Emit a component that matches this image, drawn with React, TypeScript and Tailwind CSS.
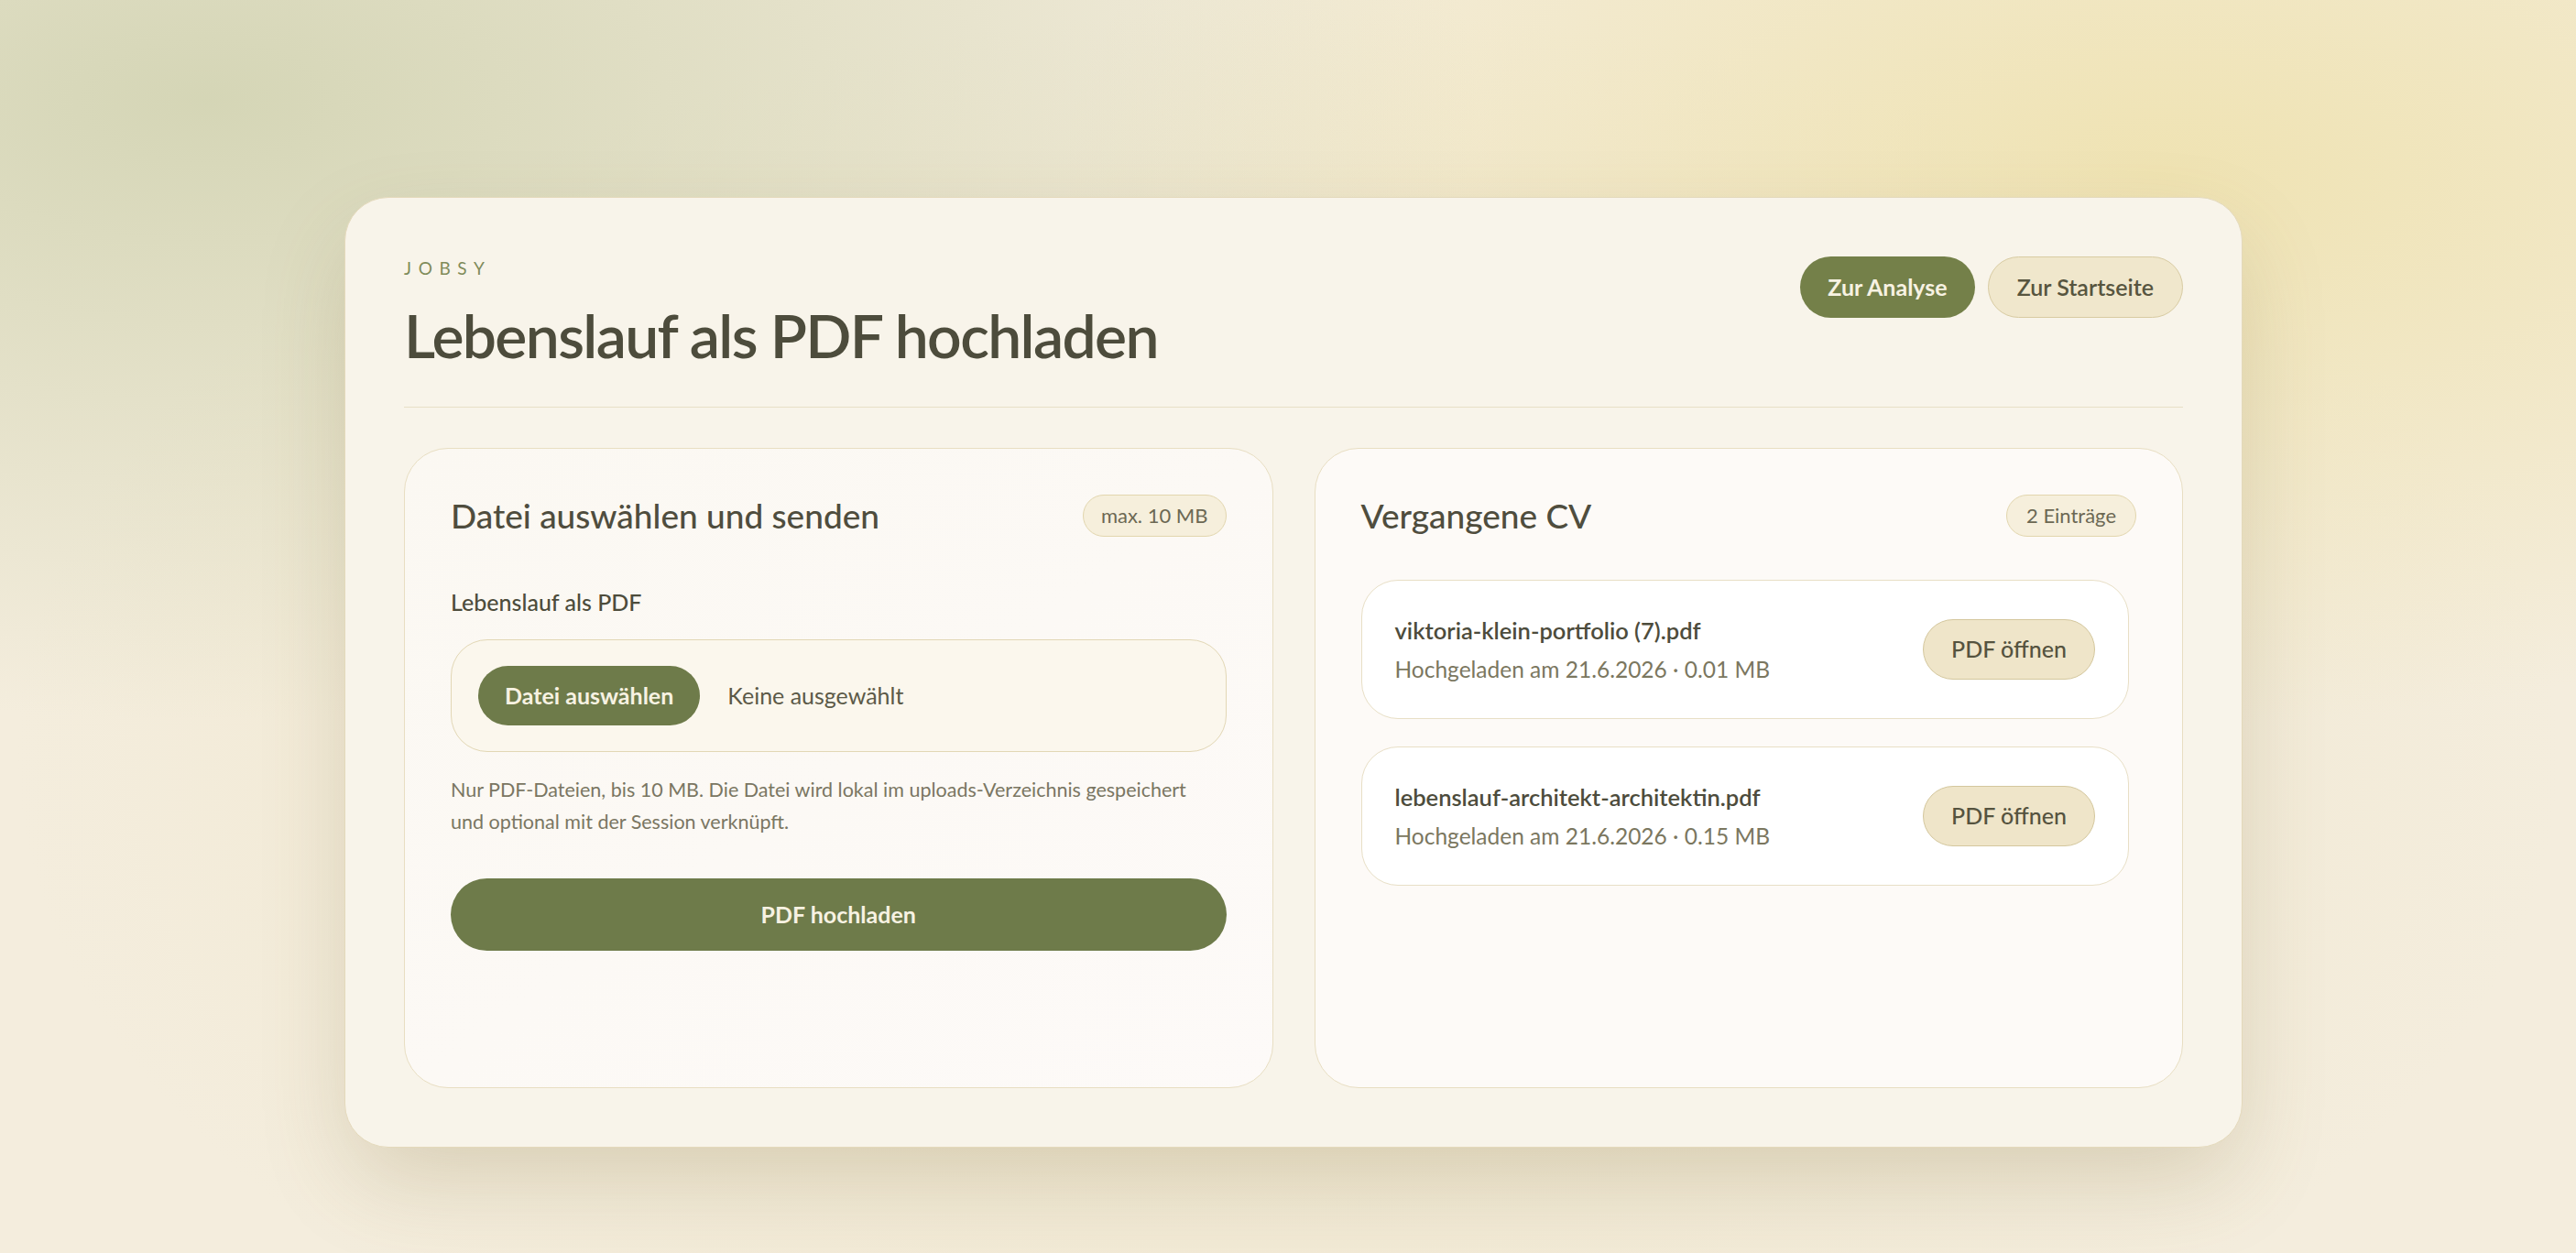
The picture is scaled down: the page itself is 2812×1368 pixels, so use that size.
const font = "font-['Lato','Noto_Sans',sans-serif]";

const pastUploads = [
  { name: "viktoria-klein-portfolio (7).pdf", date: "21.6.2026", size: "0.01 MB" },
  { name: "lebenslauf-architekt-architektin.pdf", date: "21.6.2026", size: "0.15 MB" },
];

function Badge({ children, wide }: { children: React.ReactNode; wide?: boolean }) {
  return (
    <span
      className={`rounded-full border border-[#e2d6ae] bg-[#f6efdc] py-[9px] text-[22px] leading-[26px] text-[#6c6853] ${
        wide ? "px-[21px]" : "px-[19px]"
      }`}
    >
      {children}
    </span>
  );
}

export default function App() {
  return (
    <div
      className={`${font} min-h-screen w-full bg-[#f4eddd] bg-[radial-gradient(ellipse_at_8%_8%,rgba(192,198,156,0.6),transparent_38%),radial-gradient(ellipse_at_84%_14%,rgba(236,220,150,0.6),transparent_36%),radial-gradient(ellipse_at_50%_60%,rgba(232,220,180,0.5),transparent_70%)] pt-[215px] pb-[116px] pl-[12px]`}
    >
      <div className="mx-auto w-[2072px] rounded-[48px] border border-[#e4d9bb] bg-[#f8f4ea] p-[64px] shadow-[0_40px_100px_-10px_rgba(120,100,50,0.22)]">
        {/* header */}
        <div className="flex items-start justify-between border-b border-[#e8dfc6] pb-[41px]">
          <div>
            <div className="text-[19px] leading-[26px] tracking-[0.4em] text-[#7f8b5a]">JOBSY</div>
            <h1 className="mt-[23px] text-[66px] leading-[74px] font-semibold tracking-[-0.025em] text-[#4d4c3c]">
              Lebenslauf als PDF hochladen
            </h1>
          </div>
          <div className="flex gap-[14px]">
            <button className="h-[67px] rounded-full bg-[#748049] px-[30px] text-[25px] font-bold text-[#f7f2e2]">
              Zur Analyse
            </button>
            <button className="h-[67px] rounded-full border border-[#d8cba2] bg-[#f0e7cc] px-[31px] text-[25px] font-semibold text-[#57553f]">
              Zur Startseite
            </button>
          </div>
        </div>

        <div className="mt-[44px] grid grid-cols-2 gap-[45px]">
          {/* upload form */}
          <div className="h-[699px] rounded-[48px] border border-[#e8dec2] bg-gradient-to-br from-[#fbf8f2] to-[#fdfaf8] p-[50px]">
            <div className="flex h-[46px] items-center justify-between">
              <h2 className="text-[37px] leading-[46px] font-medium text-[#4f4d3e]">Datei auswählen und senden</h2>
              <Badge>max. 10 MB</Badge>
            </div>
            <div className="mt-[53px] text-[25px] leading-[36px] font-medium text-[#4d4c3c]">Lebenslauf als PDF</div>
            <div className="mt-[23px] flex items-center gap-[30px] rounded-[40px] border border-[#e2d7b5] bg-[#fbf7ed] px-[29px] py-[28px]">
              <button className="h-[65px] rounded-full bg-[#6e7b4a] px-[29px] text-[25px] font-bold text-[#f7f2e2]">
                Datei auswählen
              </button>
              <span className="text-[25px] text-[#5c5a48]">Keine ausgewählt</span>
            </div>
            <p className="mt-[24px] max-w-[820px] text-[21.5px] leading-[35px] text-[#7a7662]">
              Nur PDF-Dateien, bis 10 MB. Die Datei wird lokal im uploads-Verzeichnis gespeichert und optional mit der Session verknüpft.
            </p>
            <button className="mt-[44px] h-[79px] w-full rounded-full bg-[#6e7b4a] text-[25px] font-bold text-[#f7f2e2]">
              PDF hochladen
            </button>
          </div>

          {/* past uploads */}
          <div className="h-[699px] rounded-[48px] border border-[#e8dec2] bg-[#fdfaf7] p-[50px]">
            <div className="flex h-[46px] items-center justify-between">
              <h2 className="text-[37px] leading-[46px] font-medium text-[#4f4d3e]">Vergangene CV</h2>
              <Badge wide>2 Einträge</Badge>
            </div>
            <div className="mt-[47px] flex flex-col gap-[30px] pr-[8px]">
              {pastUploads.map((file) => (
                <div
                  key={file.name}
                  className="flex h-[152px] items-center justify-between rounded-[40px] border border-[#e8dfc6] bg-white px-[36px]"
                >
                  <div className="flex flex-col gap-[7px]">
                    <div className="text-[25.5px] leading-[36px] font-semibold text-[#4d4c3c]">{file.name}</div>
                    <div className="text-[24.5px] leading-[36px] text-[#7b775f]">
                      Hochgeladen am {file.date} · {file.size}
                    </div>
                  </div>
                  <button className="h-[66px] rounded-full border border-[#d4c79d] bg-[#efe5c9] px-[30px] text-[25px] font-medium text-[#55533f]">
                    PDF öffnen
                  </button>
                </div>
              ))}
            </div>
          </div>
        </div>
      </div>
    </div>
  );
}
